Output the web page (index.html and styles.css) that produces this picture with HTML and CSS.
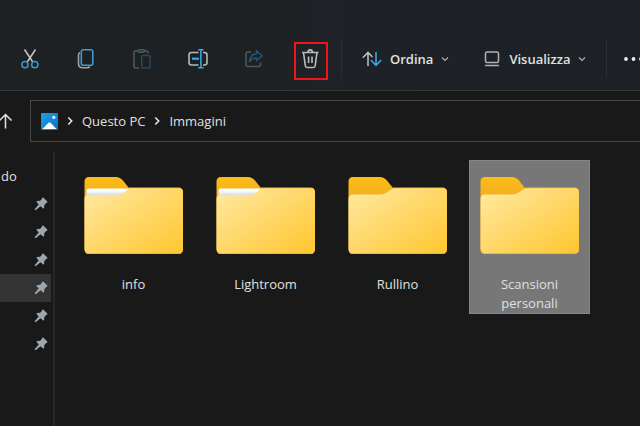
FILE: index.html
```html
<!DOCTYPE html>
<html lang="it">
<head>
<meta charset="utf-8">
<meta name="viewport" content="width=device-width, initial-scale=1">
<title>Immagini</title>
<link rel="stylesheet" href="styles.css">
</head>
<body>
<svg class="defs" aria-hidden="true">
  <defs>
    <linearGradient id="front" x1="0" y1="0" x2="1" y2="1">
      <stop offset="0" stop-color="#ffe9a2"/>
      <stop offset="1" stop-color="#ffc62f"/>
    </linearGradient>
    <linearGradient id="back" x1="0" y1="0" x2="0" y2="1">
      <stop offset="0" stop-color="#fdbd14"/>
      <stop offset="0.2" stop-color="#f4b120"/>
      <stop offset="1" stop-color="#e0a02c"/>
    </linearGradient>
    <linearGradient id="paper" x1="0" y1="0" x2="0" y2="1">
      <stop offset="0.3" stop-color="#ffffff"/>
      <stop offset="1" stop-color="#d5d8de"/>
    </linearGradient>
    <linearGradient id="sky" x1="0" y1="0" x2="1" y2="1">
      <stop offset="0" stop-color="#1da2e6"/>
      <stop offset="1" stop-color="#0b6fc2"/>
    </linearGradient>
    <symbol id="folder-empty" viewBox="0 0 100 77">
      <path d="M.5 5Q.5 0 5 0H32Q36 0 39 3.500L44.500 10.500H94.500Q99 10.500 99 15V72.500Q99 77.500 94 77.500H5.500Q.5 77.500 .5 72.500Z" fill="url(#back)"/>
      <path d="M.5 22Q.5 17.500 5 17.500H32Q37 17.500 40 14.800L43 12.500Q45 11.300 48 11.300H94.500Q99 11.300 99 16V71.500Q99 76.500 94 76.500H5.500Q.5 76.500 .5 71.500Z" fill="url(#front)"/>
    </symbol>
    <symbol id="folder-full" viewBox="0 0 100 77">
      <path d="M.5 5Q.5 0 5 0H32Q36 0 39 3.500L44.500 10.500H94.500Q99 10.500 99 15V72.500Q99 77.500 94 77.500H5.500Q.5 77.500 .5 72.500Z" fill="url(#back)"/>
      <path d="M.5 22Q.5 17.500 5 17.500H32Q37 17.500 40 14.800L43 12.500Q45 11.300 48 11.300H94.500Q99 11.300 99 16V71.500Q99 76.500 94 76.500H5.500Q.5 76.500 .5 71.500Z" fill="url(#front)"/>
      <path d="M2.500 18.500V14Q2.500 11.500 5 11.500H44.500Q39 18 34 18H5Q3 18 2.500 18.500Z" fill="url(#paper)"/>
    </symbol>
    <symbol id="pin" viewBox="0 0 14 14">
      <path d="M8.300 .8Q9 .2 9.700 .9L13.100 4.300Q13.700 5 13.100 5.600L11.300 6.700 10.300 8.200 10.100 10.900Q9.700 11.800 8.900 11.200L6.500 9.200 2 13H.8V12L4.700 7.500 2.700 5.200Q2.200 4.400 3.100 3.900L6 3.700 7.300 2.800Z" fill="#9ba6ae"/>
    </symbol>
    <symbol id="down" viewBox="0 0 8 8">
      <path d="M1 2.500L4 5.500 7 2.500" fill="none" stroke="#aeb1b3" stroke-width="1.200"/>
    </symbol>
    <symbol id="next" viewBox="0 0 8 10">
      <path d="M2.300 1.500L5.700 5 2.300 8.500" fill="none" stroke="#e4e4e4" stroke-width="1.600"/>
    </symbol>
  </defs>
</svg>

<header class="ribbon">
  <div class="toolbar" role="toolbar" aria-label="Comandi">
    <button class="tool" aria-label="Taglia">
      <svg width="20" height="22" viewBox="0 0 20 22" fill="none" stroke-width="1.500">
        <path d="M4.500 1.500L12.800 14M15.500 1.500L7.200 14" stroke="#c5c7c8"/>
        <circle cx="5" cy="16.700" r="3.100" stroke="#3399d5"/>
        <circle cx="14.800" cy="16.700" r="3.100" stroke="#3399d5"/>
      </svg>
    </button>
    <button class="tool" aria-label="Copia">
      <svg width="20" height="22" viewBox="0 0 20 22" fill="none" stroke-width="1.600">
        <path d="M4 4.500Q2.500 5.500 2.500 7V15.500Q2.500 19.700 6.500 19.700H11.500Q13 19.700 13.700 18.500" stroke="#9da1a3"/>
        <rect x="5.300" y="1.800" width="11.500" height="15.500" rx="2" stroke="#3a9bd3"/>
      </svg>
    </button>
    <button class="tool" aria-label="Incolla" disabled>
      <svg width="20" height="22" viewBox="0 0 20 22" fill="none" stroke-width="1.500">
        <path d="M7 20H3.500Q2 20 2 18.500V4.500Q2 3 3.500 3H6M12.500 3H14.500Q16 3 16 4.500V5.500" stroke="#54585a"/>
        <rect x="6" y="1.700" width="6.500" height="2.600" rx="1.300" stroke="#54585a"/>
        <rect x="9.700" y="7.500" width="8.300" height="12.500" rx="1.300" stroke="#244b61"/>
      </svg>
    </button>
    <button class="tool" aria-label="Rinomina">
      <svg width="20" height="22" viewBox="0 0 20 22" fill="none" stroke-width="1.600">
        <path d="M10.500 4.500H3.500Q1 4.500 1 7V14.500Q1 17 3.500 17H10.500M15 4.500H16.500Q19 4.500 19 7V14.500Q19 17 16.500 17H15" stroke="#b6b9bb"/>
        <path d="M12.900 2V19.500M10.200 1.700H15.600M10.200 19.800H15.600" stroke="#3ba5e2"/>
        <path d="M4 10.700H11" stroke="#3ba5e2" stroke-width="2.200"/>
      </svg>
    </button>
    <button class="tool" aria-label="Condividi" disabled>
      <svg width="20" height="22" viewBox="0 0 20 22" fill="none" stroke-width="1.500" stroke-linejoin="round">
        <path d="M7 4H4Q2 4 2 6V16.500Q2 18.500 4 18.500H14.500Q16.500 18.500 16.500 16.500V14.500" stroke="#54585a"/>
        <path d="M12.500 2.700L18.200 7.800 12.500 12.800V10Q8 9.700 5.500 13.500 6 6.300 12.500 5.700Z" stroke="#28566f"/>
      </svg>
    </button>
    <button class="tool marked" aria-label="Elimina">
      <svg width="20" height="22" viewBox="0 0 20 22" fill="none" stroke="#b9bbbc" stroke-width="1.600">
        <path d="M2 4.500H18.500M8 4.500Q8 1.900 10.200 1.900T12.500 4.500M3.500 4.500L5.300 17.700Q5.600 19.500 7 19.500H13.500Q14.900 19.500 15.200 17.700L17 4.500M8.600 8.500V15M12 8.500V15"/>
      </svg>
    </button>
    <span class="rule"></span>
    <button class="menu">
      <svg width="20" height="16" viewBox="0 0 20 16" fill="none" stroke-width="1.600">
        <path d="M6 15V2M.8 6.800L6 1.500 10.500 6" stroke="#b9bcbe"/>
        <path d="M14 1V14M8.800 9L14 14.300 19.200 9" stroke="#3ba5e2"/>
      </svg>
      <span>Ordina</span>
      <svg width="8" height="8"><use href="#down"/></svg>
    </button>
    <button class="menu">
      <svg width="18" height="16" viewBox="0 0 18 16" fill="none" stroke="#b0b3b5" stroke-width="1.500">
        <rect x="2.500" y="1" width="13" height="10.500" rx="1.500"/>
        <path d="M2 14.500H16"/>
      </svg>
      <span>Visualizza</span>
      <svg width="8" height="8"><use href="#down"/></svg>
    </button>
    <span class="rule"></span>
    <button class="more" aria-label="Altro">
      <svg width="20" height="4" viewBox="0 0 20 4" fill="#ececec">
        <circle cx="2" cy="2" r="1.900"/><circle cx="9.500" cy="2" r="1.900"/><circle cx="17" cy="2" r="1.900"/>
      </svg>
    </button>
  </div>
</header>

<div class="location">
  <button class="up" aria-label="Su">
    <svg width="14" height="16" viewBox="0 0 14 16" fill="none" stroke="#e2e2e2" stroke-width="1.500">
      <path d="M5.500 15.500V1.500M-.5 7.500L5.500 1.500 11.500 7.500"/>
    </svg>
  </button>
  <nav class="address" aria-label="Percorso">
    <svg width="17" height="17" viewBox="0 0 17 17">
      <rect width="17" height="17" rx="1" fill="url(#sky)"/>
      <path d="M1.500 16L7.500 9.800Q8.500 9 9.500 9.800L15.500 16Z" fill="#fff"/>
      <circle cx="12.800" cy="4.300" r="1.600" fill="#e9f6ff"/>
    </svg>
    <svg width="8" height="10"><use href="#next"/></svg>
    <a href="#pc">Questo PC</a>
    <svg width="8" height="10"><use href="#next"/></svg>
    <a href="#immagini">Immagini</a>
  </nav>
</div>

<div class="content">
  <aside class="sidebar">
    <div class="row"><span class="name">do</span></div>
    <div class="row"><svg width="14" height="14"><use href="#pin"/></svg></div>
    <div class="row"><svg width="14" height="14"><use href="#pin"/></svg></div>
    <div class="row"><svg width="14" height="14"><use href="#pin"/></svg></div>
    <div class="row current"><svg width="14" height="14"><use href="#pin"/></svg></div>
    <div class="row"><svg width="14" height="14"><use href="#pin"/></svg></div>
    <div class="row"><svg width="14" height="14"><use href="#pin"/></svg></div>
  </aside>
  <main class="files">
    <a class="tile" href="#info"><svg width="100" height="77"><use href="#folder-full"/></svg><span>info</span></a>
    <a class="tile" href="#lightroom"><svg width="100" height="77"><use href="#folder-full"/></svg><span>Lightroom</span></a>
    <a class="tile" href="#rullino"><svg width="100" height="77"><use href="#folder-empty"/></svg><span>Rullino</span></a>
    <a class="tile selected" href="#scansioni"><svg width="100" height="77"><use href="#folder-empty"/></svg><span>Scansioni personali</span></a>
  </main>
</div>
</body>
</html>
```
FILE: styles.css
```css
*,
*::after {
  box-sizing: border-box;
}

body {
  display: flex;
  flex-direction: column;
  min-height: 100vh;
  margin: 0;
  overflow: hidden;
  background: #191919;
  color: #e0e0e0;
  font: 13px/20px "Open Sans", "Noto Sans", sans-serif;
}

svg {
  display: block;
  flex: none;
}

.defs {
  position: absolute;
  width: 0;
  height: 0;
}

button {
  display: flex;
  align-items: center;
  flex: none;
  padding: 0;
  border: 0;
  background: none;
  color: inherit;
  font: inherit;
}

a {
  color: inherit;
  text-decoration: none;
}

.ribbon {
  padding-top: 28px;
  border-bottom: 1px solid #33373a;
  background: linear-gradient(90deg, #1d2122, #1e2125 50%, #1d2125);
}

.toolbar {
  display: flex;
  align-items: center;
  height: 62px;
  padding-left: 2px;
}

.tool {
  justify-content: center;
  width: 56px;
  height: 40px;
}

.marked {
  position: relative;
}

.marked::after {
  content: "";
  position: absolute;
  top: 3px;
  left: 12px;
  width: 34px;
  height: 38px;
  border: 2px solid #f01518;
}

.rule {
  flex: none;
  width: 1px;
  height: 38px;
  margin: 0 3px;
  background: #2b2f32;
}

.menu {
  gap: 8px;
  padding: 0 17px;
  font-weight: 600;
}

.more {
  margin-left: 14px;
}

.location {
  display: flex;
  align-items: center;
  padding-top: 9px;
}

.up {
  width: 30px;
}

.address {
  display: flex;
  align-items: center;
  flex: 1;
  gap: 8px;
  height: 42px;
  padding-left: 10px;
  border: 1px solid #484848;
  border-right: 0;
}

.content {
  display: flex;
  flex: 1;
  padding-top: 10px;
}

.sidebar {
  width: 55px;
  padding: 10px 2px 0 0;
  border-right: 2px solid #282828;
}

.row {
  display: flex;
  align-items: center;
  justify-content: flex-end;
  height: 28px;
  padding-right: 3px;
}

.row .name {
  margin-right: auto;
  padding-left: 1px;
}

.current {
  background: #333333;
}

.files {
  display: grid;
  grid-template-columns: repeat(auto-fill, 121px);
  flex: 1;
  gap: 11px;
  align-content: start;
  align-items: start;
  padding: 8px 18px;
}

.tile {
  display: flex;
  flex-direction: column;
  align-items: center;
  gap: 21px;
  padding: 17px 10px 1px;
  line-height: 19px;
  text-align: center;
}

.tile span {
  max-width: 90px;
}

.selected {
  background: #777777;
  outline: 1px solid #858585;
  outline-offset: -1px;
}
```
